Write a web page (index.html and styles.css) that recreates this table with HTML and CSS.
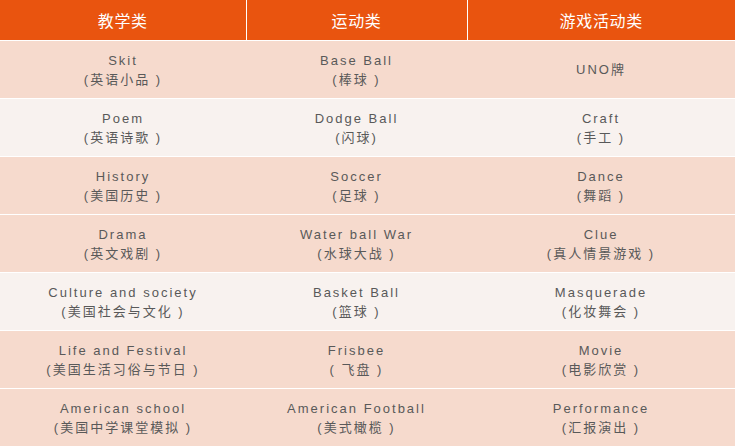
FILE: index.html
```html
<!DOCTYPE html>
<html lang="zh">
<head>
<meta charset="utf-8">
<link rel="stylesheet" href="styles.css">
</head>
<body>
<table class="schedule">
  <colgroup>
    <col class="c1"><col class="c2"><col class="c3">
  </colgroup>
  <thead>
    <tr><th>教学类</th><th>运动类</th><th>游戏活动类</th></tr>
  </thead>
  <tbody>
    <tr class="peach">
      <td>Skit<br>(英语小品 )</td>
      <td>Base Ball<br>(棒球 )</td>
      <td>UNO牌</td>
    </tr>
    <tr class="light">
      <td>Poem<br>(英语诗歌 )</td>
      <td>Dodge Ball<br>(闪球)</td>
      <td>Craft<br>(手工 )</td>
    </tr>
    <tr class="peach">
      <td>History<br>(美国历史 )</td>
      <td>Soccer<br>(足球 )</td>
      <td>Dance<br>(舞蹈 )</td>
    </tr>
    <tr class="peach">
      <td>Drama<br>(英文戏剧 )</td>
      <td>Water ball War<br>(水球大战 )</td>
      <td>Clue<br>(真人情景游戏 )</td>
    </tr>
    <tr class="light">
      <td>Culture and society<br>(美国社会与文化 )</td>
      <td>Basket Ball<br>(篮球 )</td>
      <td>Masquerade<br>(化妆舞会 )</td>
    </tr>
    <tr class="peach">
      <td>Life and Festival<br>(美国生活习俗与节日 )</td>
      <td>Frisbee<br>( 飞盘 )</td>
      <td>Movie<br>(电影欣赏 )</td>
    </tr>
    <tr class="peach">
      <td>American school<br>(美国中学课堂模拟 )</td>
      <td>American Football<br>(美式橄榄 )</td>
      <td>Performance<br>(汇报演出 )</td>
    </tr>
  </tbody>
</table>
</body>
</html>
```

FILE: styles.css
```css
html, body {
  margin: 0;
  padding: 0;
  background: #ffffff;
}
.schedule {
  width: 735px;
  border-collapse: collapse;
  table-layout: fixed;
  font-family: "Liberation Sans", Arial, "Noto Sans CJK SC", sans-serif;
}
.c1 { width: 246px; }
.c2 { width: 221px; }
.c3 { width: 268px; }
.schedule th {
  height: 40px;
  padding: 0;
  background: #e9540f;
  color: #ffffff;
  font-size: 16px;
  font-weight: normal;
  letter-spacing: 0.7px;
  text-align: center;
  border-left: 1px solid #ffffff;
  box-sizing: border-box;
}
.schedule th:first-child { border-left: none; }
.schedule td {
  height: 58px;
  padding: 1px 0 0;
  box-sizing: border-box;
  border-top: 1px solid #ffffff;
  text-align: center;
  vertical-align: middle;
  color: #595959;
  font-size: 13px;
  line-height: 19px;
  letter-spacing: 2px;
}
.peach td { background: #f6dacd; }
.light td { background: #f8f2ef; }
```
